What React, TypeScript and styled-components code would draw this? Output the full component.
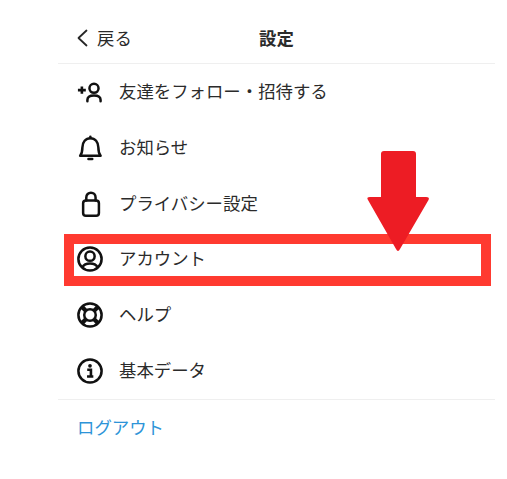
import React from "react";
import styled, {createGlobalStyle} from "styled-components";

const GlobalStyle = createGlobalStyle`
  html, body {
    margin: 0;
    padding: 0;
    background: #ffffff;
  }
  body {
    font-family: "Noto Sans CJK JP", "Noto Sans", sans-serif;
    color: #2b2b2b;
  }
`;

const Page = styled.div`
  position: relative;
  width: 507px;
  height: 479px;
  overflow: hidden;
  padding-left: 58px;
  box-sizing: border-box;
`;

const Panel = styled.div`
  width: 437px;
`;

const Header = styled.header`
  height: 64px;
  padding: 12px 19px 0;
  box-sizing: border-box;
  display: grid;
  grid-template-columns: 1fr auto 1fr;
  align-items: center;
  border-bottom: 1px solid #efefef;
`;

const BackLink = styled.div`
  display: flex;
  align-items: center;
  gap: 6px;
  font-size: 17.4px;
  line-height: 24px;
`;

const Title = styled.h1`
  margin: 0;
  font-size: 17.4px;
  line-height: 24px;
  font-weight: 700;
`;

const List = styled.ul`
  list-style: none;
  margin: 0;
  padding: 0;
`;

const Row = styled.li`
  height: 55.84px;
  padding-left: 19px;
  display: flex;
  align-items: center;
  gap: 16px;
  font-size: 17.4px;
`;

const IconSlot = styled.span`
  width: 26px;
  height: 26px;
  flex: none;
  display: flex;
  align-items: center;
  justify-content: center;
`;

const Label = styled.span`
  margin-bottom: 3px;
`;

const Footer = styled.div`
  height: 56px;
  padding: 0 0 2px 19px;
  box-sizing: border-box;
  display: flex;
  align-items: center;
  border-top: 1px solid #efefef;
  font-size: 17.4px;
  color: #2d94d8;
`;

const Highlight = styled.div`
  position: absolute;
  left: 64px;
  top: 234px;
  width: 427px;
  height: 52px;
  box-sizing: border-box;
  border: 10px solid #ff3a30;
  pointer-events: none;
`;

const Arrow = styled.svg`
  position: absolute;
  left: 366px;
  top: 150px;
`;

const stroke = {fill: "none", stroke: "#111111", strokeWidth: 2.7, strokeLinecap: "round", strokeLinejoin: "round"} as const;

const BackIcon = () => <svg width="14" height="20" viewBox="0 0 14 20">
    <path d="M9.500 2.500 L1.500 10 L9.500 17.500" fill="none" stroke="#262626" strokeWidth="1.8" strokeLinecap="round" strokeLinejoin="round"/>
</svg>;

const FollowIcon = () => <svg width="26" height="26" viewBox="0 0 28 28" overflow="visible">
    <path d="M1 12 H9.500 M5.250 8 V16" {...stroke} strokeWidth={2.8} strokeLinecap="butt"/>
    <circle cx="18.300" cy="10" r="4.900" {...stroke}/>
    <path d="M11.200 24 V22.500 C11.200 19 14 17.800 18.300 17.800 C22.600 17.800 25.400 19 25.400 22.500 V24" {...stroke}/>
</svg>;

const BellIcon = () => <svg width="26" height="26" viewBox="0 0 28 28">
    <path d="M3.400 22.400 H25.400 C23.400 19.900 23 18 23 13.500 C23 7.500 19.400 3.400 14.400 3.400 C9.400 3.400 5.800 7.500 5.800 13.500 C5.800 18 5.400 19.900 3.400 22.400 Z" {...stroke}/>
    <path d="M12.400 25.800 H16.400" {...stroke} strokeWidth={2.8}/>
    <path d="M14.400 1.800 V3.200" {...stroke}/>
</svg>;

const LockIcon = () => <svg width="26" height="26" viewBox="0 0 28 28">
    <rect x="6.600" y="10.200" width="17" height="16.400" rx="3" {...stroke}/>
    <path d="M10 10.200 V7 C10 3.800 12.300 1.900 15 1.900 C17.700 1.900 20 3.800 20 7 V10.200" {...stroke}/>
</svg>;

const AccountIcon = () => <svg width="26" height="26" viewBox="0 0 28 28">
    <circle cx="14" cy="14" r="12.500" {...stroke}/>
    <circle cx="14" cy="11" r="5" {...stroke}/>
    <path d="M5.800 22.800 C7.500 19.600 10 18.800 14 18.800 C18 18.800 20.500 19.600 22.200 22.800" {...stroke}/>
</svg>;

const HelpIcon = () => <svg width="26" height="26" viewBox="0 0 28 28">
    <circle cx="14" cy="14" r="12.500" {...stroke}/>
    <circle cx="14" cy="14" r="6.200" {...stroke}/>
    <path d="M5.500 5.500 L9.800 9.800 M22.500 5.500 L18.200 9.800 M5.500 22.500 L9.800 18.200 M22.500 22.500 L18.200 18.200" {...stroke} strokeWidth={4.600} strokeLinecap="butt"/>
</svg>;

const InfoIcon = () => <svg width="26" height="26" viewBox="0 0 28 28">
    <circle cx="14" cy="14" r="12.500" {...stroke}/>
    <circle cx="14" cy="8.400" r="2" fill="#111111"/>
    <path d="M11 12.600 H15 V19.600 M10.800 20 H17.600" {...stroke} strokeWidth={2.800} strokeLinecap="butt" strokeLinejoin="miter"/>
</svg>;

const items = [
    {label: "友達をフォロー・招待する", icon: <FollowIcon/>},
    {label: "お知らせ", icon: <BellIcon/>},
    {label: "プライバシー設定", icon: <LockIcon/>},
    {label: "アカウント", icon: <AccountIcon/>},
    {label: "ヘルプ", icon: <HelpIcon/>},
    {label: "基本データ", icon: <InfoIcon/>},
];

export default function App() {
    return <Page>
        <GlobalStyle/>
        <Panel>
            <Header>
                <BackLink><BackIcon/>戻る</BackLink>
                <Title>設定</Title>
            </Header>
            <List>
                {items.map(item => <Row key={item.label}>
                    <IconSlot>{item.icon}</IconSlot>
                    <Label>{item.label}</Label>
                </Row>)}
            </List>
            <Footer>ログアウト</Footer>
        </Panel>
        <Highlight/>
        <Arrow width="64" height="104" viewBox="0 0 64 104">
            <path d="M18 1 H47 Q50 1 50 4 V47 H60 Q64 47 62.500 50 L34 99 Q32 103 30 99 L2 50 Q0 47 4 47 H15 V4 Q15 1 18 1 Z" fill="#ed1c24"/>
        </Arrow>
    </Page>;
}
